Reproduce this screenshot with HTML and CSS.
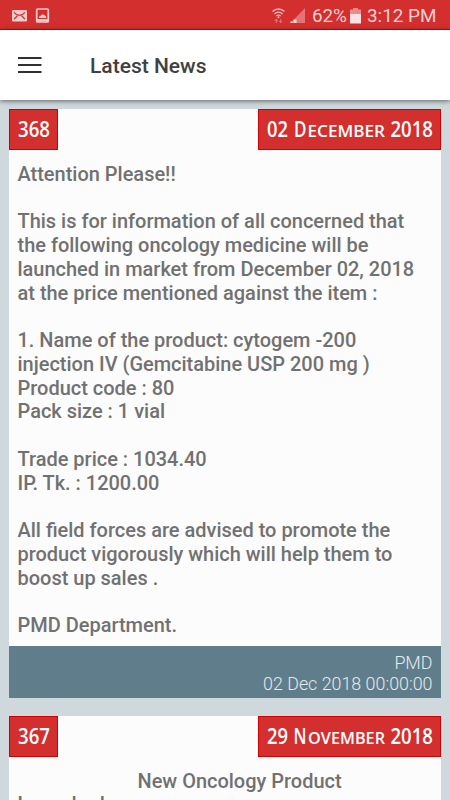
FILE: index.html
```
<!DOCTYPE html>
<html lang="en">
<head>
<meta charset="utf-8">
<meta name="viewport" content="width=device-width, initial-scale=1">
<title>Latest News</title>
<link rel="stylesheet" href="styles.css">
</head>
<body>
<div class="status">
  <svg class="notifications" width="38" height="16" viewBox="0 0 38 16">
    <rect y="2" width="15" height="11.5" rx="1.3" fill="#f6caca"/>
    <path d="M2 4.300q2.500 3 5.500 3t5.500-3M2.200 11l3.300-3.400M12.800 11L9.500 7.600" fill="none" stroke="#d32f2f" stroke-width="1.300"/>
    <rect x="24.700" y="1" width="11.600" height="13" rx="1" fill="none" stroke="#f6caca" stroke-width="1.700"/>
    <path d="M27 10V8.500l2-1 1.700-1.200 2 1 1.500 1.200V10z" fill="#f6caca"/>
    <path d="M25 12.300h11" stroke="#f6caca" stroke-width="2.600"/>
  </svg>
  <div class="system">
    <svg class="signals" width="34" height="16" viewBox="0 0 34 16">
      <g fill="none" stroke="#f3bcbc" stroke-width="1.300">
        <path d="M.5 3.500q6-5 12 0M2.300 5.900q4.200-3.400 8.400 0M4.200 8q2.300-1.700 4.600 0"/>
      </g>
      <circle cx="6.500" cy="9.300" r="1" fill="#f3bcbc"/>
      <path d="M4.300 15v-3.500M2.800 12.800l1.500-1.700 1.500 1.700M8.700 11v3.500M7.200 13l1.500 1.700 1.500-1.700" fill="none" stroke="#e67c7c" stroke-width="1"/>
      <path d="M18.500 15L33 0v15z" fill="#e47474"/>
      <path d="M18.500 15v-1.500h2V15zM21.500 15v-3.500h3V15z" fill="#f9dcdc"/>
    </svg>
    <span class="percent">62%</span>
    <svg class="battery" width="11" height="16" viewBox="0 0 11 16">
      <path d="M3 0h5v1.500h3V6H0V1.500h3z" fill="#e88c8c"/>
      <path d="M0 6h11v9.500H0z" fill="#fae2e2"/>
    </svg>
    <span class="clock">3:12 PM</span>
  </div>
</div>
<header class="toolbar">
  <svg class="menu" width="24" height="18" viewBox="0 0 24 18">
    <path d="M0 2h23.500M0 9h23.500M0 16h23.500" stroke="#303030" stroke-width="2"/>
  </svg>
  <h1>Latest News</h1>
</header>
<main class="feed">
  <article class="card">
    <div class="badges">
      <svg class="badge number" width="49" height="41"><text x="8" y="26.600" textLength="32" lengthAdjust="spacingAndGlyphs">368</text></svg>
      <svg class="badge" width="183" height="41">
        <text x="8" y="26.600" textLength="21" lengthAdjust="spacingAndGlyphs">02</text>
        <text x="35" y="26.600" textLength="12.500" lengthAdjust="spacingAndGlyphs">D</text>
        <text class="small" x="48.500" y="26.600" textLength="77.500" lengthAdjust="spacingAndGlyphs">ECEMBER</text>
        <text x="131.500" y="26.600" textLength="42.500" lengthAdjust="spacingAndGlyphs">2018</text>
      </svg>
    </div>
    <div class="message">Attention Please!!

This is for information of all concerned that
the following oncology medicine will be
launched in market from December 02, 2018
at the price mentioned against the item :

1. Name of the product: cytogem -200
injection IV (Gemcitabine USP 200 mg )
Product code : 80
Pack size : 1 vial

Trade price : 1034.40
IP. Tk. : 1200.00

All field forces are advised to promote the
product vigorously which will help them to
boost up sales .

PMD Department.</div>
    <footer class="meta">PMD<br>02 Dec 2018 00:00:00</footer>
  </article>
  <article class="card">
    <div class="badges">
      <svg class="badge number" width="49" height="41"><text x="8" y="26.600" textLength="32" lengthAdjust="spacingAndGlyphs">367</text></svg>
      <svg class="badge" width="183" height="41">
        <text x="8" y="26.600" textLength="21" lengthAdjust="spacingAndGlyphs">29</text>
        <text x="34.500" y="26.600" textLength="13" lengthAdjust="spacingAndGlyphs">N</text>
        <text class="small" x="49" y="26.600" textLength="77" lengthAdjust="spacingAndGlyphs">OVEMBER</text>
        <text x="131.500" y="26.600" textLength="42.500" lengthAdjust="spacingAndGlyphs">2018</text>
      </svg>
    </div>
    <div class="message"><span class="headline">New Oncology Product</span>
Launched</div>
  </article>
</main>
</body>
</html>
```

FILE: styles.css
```
* { box-sizing: border-box; }
html, body { height: 100%; }
body {
  margin: 0;
  overflow: hidden;
  display: flex;
  flex-direction: column;
  background: #cfd8dd;
  font-family: Roboto, sans-serif;
}
svg { display: block; flex: none; }
.status {
  flex: none;
  height: 30px;
  padding: 2px 14px 0 12px;
  display: flex;
  align-items: center;
  justify-content: space-between;
  background: #d32f2f;
  border-bottom: 1px solid #c80707;
  color: #f7cfcf;
  font-size: 18.900px;
}
.system { display: flex; align-items: center; white-space: nowrap; }
.percent { margin-left: 6px; width: 35px; letter-spacing: -0.100px; }
.battery { margin-left: 3px; }
.clock { margin-left: 6px; width: 69px; }
.toolbar {
  flex: none;
  height: 70px;
  padding-left: 18px;
  display: flex;
  align-items: center;
  background: #fff;
  box-shadow: 0 1px 5px rgba(0, 0, 0, .55);
  z-index: 1;
}
h1 {
  margin: 2px 0 0 48px;
  font-size: 21px;
  font-weight: 500;
  color: #404040;
}
.feed {
  flex: 1;
  min-height: 0;
  overflow: hidden;
  padding: 9px 9px 0;
}
.card { margin-bottom: 18px; background: #fcfcfc; }
.badges { display: flex; justify-content: space-between; }
.badge {
  background: #d32f2f;
  border: 1px solid #d00000;
  fill: #fff;
  font-family: "Open Sans", "Noto Sans", sans-serif;
  font-size: 20.700px;
  font-weight: 600;
}
.small { font-size: 16.800px; }
.message {
  padding: 12.600px 0 7.700px 8.500px;
  white-space: pre;
  font-size: 19.980px;
  line-height: 23.780px;
  font-weight: 500;
  color: #717171;
}
.headline { margin-left: 120px; }
.meta {
  height: 52px;
  padding: 7px 8.500px 0 0;
  background: #607d8b;
  color: #e5eaed;
  text-align: right;
  font-size: 17.850px;
  line-height: 20.700px;
  font-weight: 300;
}
```
